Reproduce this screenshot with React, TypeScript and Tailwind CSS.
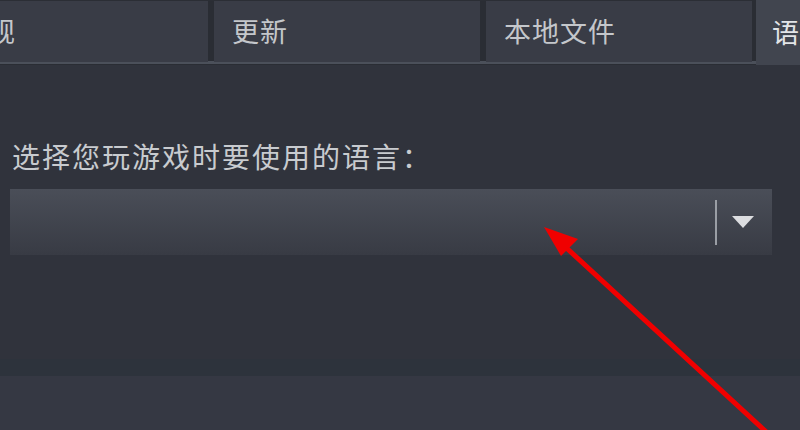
const cjk = { fontFamily: '"Noto Sans CJK SC", "Noto Sans", sans-serif' };

const tabs = ["常规", "更新", "本地文件"];

function Tab({ label, first }: { label: string; first?: boolean }) {
  return (
    <div
      className={
        "flex h-[61px] w-[266px] shrink-0 items-center whitespace-nowrap bg-[#393c46] pl-[18px] text-[27px] tracking-[1px] text-[#c4c7cb] " +
        (first ? "-ml-[58px]" : "")
      }
    >
      {label}
    </div>
  );
}

export default function App() {
  return (
    <div
      className="relative h-[430px] w-[800px] overflow-hidden bg-[#30333c]"
      style={cjk}
    >
      {/* tab strip */}
      <div className="flex h-[65px] bg-[#2a2d34]">
        <div className="flex gap-[6px] border-t border-[#2b2e35]">
          {tabs.map((t, i) => (
            <Tab key={t} label={t} first={i === 0} />
          ))}
        </div>
        <div className="ml-[4px] flex h-[65px] min-w-0 flex-1 items-center overflow-hidden whitespace-nowrap bg-[#41454f] pl-[16px] text-[27px] tracking-[1px] text-[#e2e4e7]">
          语言
        </div>
      </div>
      <div className="-mt-[4px] h-[3px] w-[757px] bg-[#4b505a]" />

      <div className="px-[10px] pt-[76px]">
        <p className="whitespace-nowrap pl-[2px] text-[28px] leading-[32px] tracking-[2px] text-[#c8cbcf]">
          选择您玩游戏时要使用的语言：
        </p>
        <div className="mt-[17px] flex h-[66px] w-[762px] items-center justify-end bg-gradient-to-b from-[#4a4e58] to-[#383b44]">
          <div className="h-[45px] w-[2px] bg-[#9a9ea5]" />
          <div className="ml-[15px] mr-[18px] h-0 w-0 border-x-[11px] border-t-[12px] border-x-transparent border-t-[#dcdde0]" />
        </div>
      </div>

      <div className="mt-[104px] h-[17px] bg-[#2d333c]" />
      <div className="h-full bg-[#353843]" />

      {/* red annotation arrow */}
      <svg
        className="pointer-events-none absolute inset-0"
        width="800"
        height="430"
        viewBox="0 0 800 430"
      >
        <line
          x1="560"
          y1="242"
          x2="775"
          y2="440"
          stroke="#f00000"
          strokeWidth="5"
          strokeLinecap="round"
        />
        <polygon points="544,227 578,239 561,256" fill="#f00000" />
      </svg>
    </div>
  );
}
